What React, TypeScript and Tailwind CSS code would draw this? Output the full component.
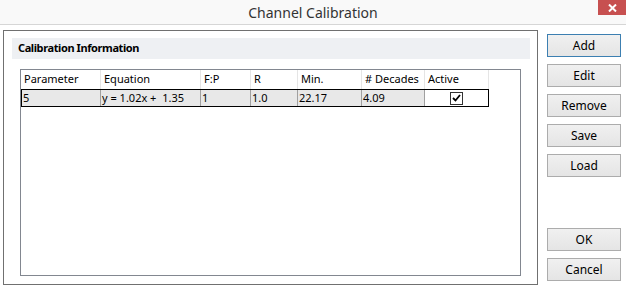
import React from "react";

const cols = [
  { label: "Parameter", w: "w-[80px]", value: "5" },
  { label: "Equation", w: "w-[100px]", value: "y = 1.02x +  1.35" },
  { label: "F:P", w: "w-[50px]", value: "1" },
  { label: "R", w: "w-[47px]", value: "1.0" },
  { label: "Min.", w: "w-[64px]", value: "22.17" },
  { label: "# Decades", w: "w-[63px]", value: "4.09" },
];

const topButtons = ["Add", "Edit", "Remove", "Save", "Load"];

function DlgButton({ label, focused }: { label: string; focused?: boolean }) {
  return (
    <button
      className={`h-[23px] w-[74px] border bg-gradient-to-b from-[#f0f0f0] to-[#e5e5e5] text-[12px] text-black ${
        focused ? "border-[#3c7fb1]" : "border-[#acacac]"
      }`}
    >
      {label}
    </button>
  );
}

export default function App() {
  return (
    <div
      className="relative h-[285px] w-[626px] overflow-hidden bg-white text-[12px] text-black"
      style={{ fontFamily: '"Noto Sans", "Open Sans", sans-serif' }}
    >
      {/* title bar */}
      <div className="relative flex h-[25px] items-center justify-center border-b border-[#d6d6d6] bg-[#f9f9f9]">
        <span className="text-[14px] text-[#333]">Channel Calibration</span>
        <div className="absolute right-0 top-0 flex h-[15px] w-[28px] items-center justify-center bg-[#c75050]">
          <svg width="9" height="8" viewBox="0 0 9 8">
            <path d="M1 0.5 L8 7.5 M8 0.5 L1 7.5" stroke="white" strokeWidth="2" />
          </svg>
        </div>
      </div>

      <div className="flex pl-[3px] pt-[5px]">
        {/* group box */}
        <div className="flex h-[255px] w-[535px] flex-col border border-[#707070] pl-[8px] pr-[7px] pt-[7px]">
          <div className="flex h-[21px] items-center bg-[#eef0f3] pl-[6px] text-[11px] font-bold tracking-[-0.4px]">
            Calibration Information
          </div>
          <div className="ml-[8px] mr-[9px] mt-[10px] h-[207px] border border-[#828790] bg-white">
            {/* header row */}
            <div className="flex h-[19px] text-[11px]">
              {cols.map((c) => (
                <div
                  key={c.label}
                  className={`${c.w} flex items-center border-r border-[#e5e5e5] pl-[3px]`}
                >
                  {c.label}
                </div>
              ))}
              <div className="flex w-[64px] items-center border-r border-[#e5e5e5] pl-[3px]">Active</div>
            </div>
            {/* data row */}
            <div className="flex h-[18px] w-[468px] border border-black text-[11px]">
              {cols.map((c, i) => (
                <div
                  key={c.label}
                  className={`${i === 0 ? "w-[79px]" : c.w} flex items-center whitespace-pre border-r border-[#a0a0a0] bg-[#e8e8e8] pl-[1px]`}
                >
                  {c.value}
                </div>
              ))}
              <div className="flex flex-1 items-center justify-center bg-white">
                <div className="flex h-[13px] w-[13px] items-center justify-center border border-[#333] bg-white">
                  <svg width="9" height="8" viewBox="0 0 9 8">
                    <path d="M1 4 L3.5 6.5 L8 1" fill="none" stroke="black" strokeWidth="1.8" />
                  </svg>
                </div>
              </div>
            </div>
          </div>
        </div>

        {/* buttons */}
        <div className="ml-[9px] mt-[4px] flex h-[247px] flex-col">
          <div className="flex flex-col gap-[7px]">
            {topButtons.map((b, i) => (
              <DlgButton key={b} label={b} focused={i === 0} />
            ))}
          </div>
          <div className="mt-auto flex flex-col gap-[7px]">
            <DlgButton label="OK" />
            <DlgButton label="Cancel" />
          </div>
        </div>
      </div>
    </div>
  );
}
